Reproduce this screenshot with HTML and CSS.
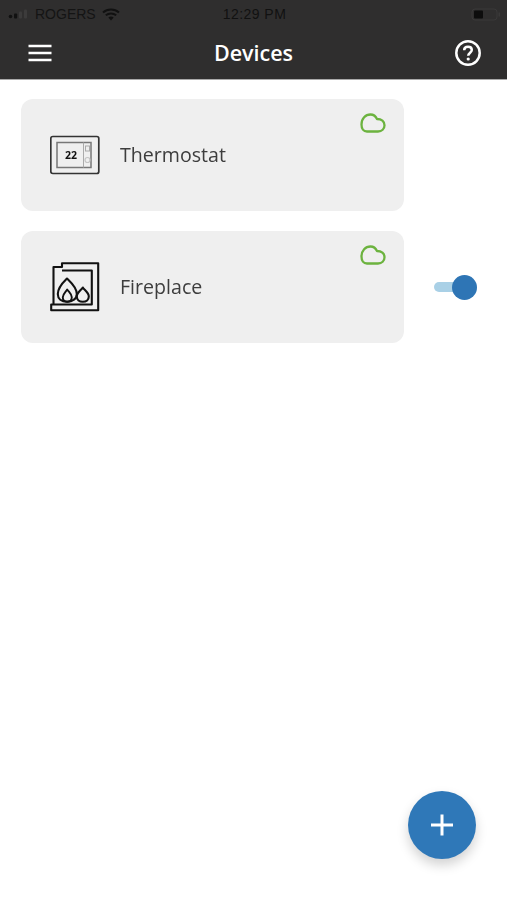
FILE: index.html
```html
<!DOCTYPE html>
<html lang="en">
<head>
<meta charset="utf-8">
<title>Devices</title>
<link rel="stylesheet" href="styles.css">
</head>
<body>
<div class="app">
  <header class="header">
    <div class="status">
      <div class="status-left">
        <svg class="signal" width="22" height="10" viewBox="0 0 22 10"><circle cx="2.500" cy="7.500" r="1.800" fill="#111"/><rect x="6" y="4.500" width="3.200" height="5" rx="1" fill="#111"/><rect x="11" y="2.500" width="3" height="7" rx="1" fill="#3c3b3b"/><rect x="16" y="0.500" width="3" height="9" rx="1" fill="#3c3b3b"/></svg>
        <span class="carrier">ROGERS</span>
        <svg class="wifi" width="18" height="13" viewBox="0 0 18 13"><path d="M1 4.500C5.500 .5 12.500 .5 17 4.500M3.800 7.300C6.800 4.800 11.200 4.800 14.200 7.300" fill="none" stroke="#111" stroke-width="2"/><path d="M6.300 9.400C8 8.200 10 8.200 11.700 9.400L9 12.500Z" fill="#111"/></svg>
      </div>
      <span class="clock">12:29 PM</span>
      <svg class="battery" width="30" height="13" viewBox="0 0 30 13"><rect x="1" y="1" width="25" height="11" rx="3" fill="none" stroke="#3a3939" stroke-width="1"/><rect x="3" y="2.500" width="9" height="8" rx="1" fill="#0d0d0d"/><rect x="27.500" y="4.500" width="1.500" height="4" fill="#3a3939"/></svg>
    </div>
    <nav class="nav">
      <svg class="nav-icon" width="26" height="20" viewBox="0 0 26 20"><path d="M1.500 3h23M1.500 10h23M1.500 17h23" stroke="#fff" stroke-width="2.600" fill="none"/></svg>
      <h1 class="title">Devices</h1>
      <svg class="nav-icon" width="28" height="28" viewBox="0 0 28 28"><circle cx="14" cy="14" r="11.700" fill="none" stroke="#fff" stroke-width="2.500"/><path d="M10.200 11.200C10.200 9 11.900 7.800 14 7.800C16.200 7.800 17.800 9.100 17.800 11C17.800 13.600 14.200 13.800 14.200 16.800" fill="none" stroke="#fff" stroke-width="2.500"/><circle cx="14.200" cy="20" r="1.600" fill="#fff"/></svg>
    </nav>
  </header>

  <main class="list">
    <div class="row">
      <div class="card">
        <svg class="device-icon" width="50" height="50" viewBox="0 0 50 50">
          <rect x="0.800" y="6.500" width="48" height="37" rx="2" fill="none" stroke="#333" stroke-width="1.700"/>
          <rect x="7" y="12.500" width="34" height="25" fill="none" stroke="#777" stroke-width="1.500"/>
          <path d="M33.500 12.500v25" stroke="#aaa" stroke-width="1"/>
          <rect x="35.500" y="16" width="4" height="5" fill="none" stroke="#aaa" stroke-width="1"/>
          <circle cx="37.500" cy="30" r="2.500" fill="none" stroke="#c4c4c4" stroke-width="1.200"/>
          <text class="temp" x="21" y="29" text-anchor="middle">22</text>
        </svg>
        <span class="name">Thermostat</span>
        <svg class="cloud" width="26" height="20" viewBox="0 0 26 20"><path d="M7 18.500C3.500 18.500 1.500 15.500 1.500 11.500C1.500 5.500 5.500 1.500 10.500 1.500C13.500 1.500 15.800 3.300 17 6C21.500 6 24.500 8.500 24.500 12.300C24.500 16 21.800 18.500 18 18.500Z" fill="none" stroke="#6cb33f" stroke-width="2.300" stroke-linejoin="round"/></svg>
      </div>
    </div>
    <div class="row">
      <div class="card">
        <svg class="device-icon" width="50" height="50" viewBox="0 0 50 50">
          <path d="M3.500 42.500V5H12V1.300H48.200V48.300H1.200V42.500H41.800V8.500H12" fill="none" stroke="#111" stroke-width="2.100" stroke-linejoin="round"/>
          <path d="M17 16.500C20 19.500 26.800 25 26.800 32C26.800 36.800 22.500 39.800 17 39.800C11.500 39.800 7.800 36.800 7.800 32C7.800 25 14 19.500 17 16.500Z" fill="none" stroke="#111" stroke-width="2.100" stroke-linejoin="round"/>
          <path d="M17.200 27.500C18.800 30 21.800 32 21.800 35.300C21.800 38 19.800 39.800 17.200 39.800C14.600 39.800 12.800 38 12.800 35.300C12.800 32 15.800 30 17.200 27.500Z" fill="none" stroke="#111" stroke-width="1.900" stroke-linejoin="round"/>
          <path d="M32.800 25.500C34.300 28 38.800 30.500 38.800 34.500C38.800 37.700 36.300 39.800 32.800 39.800C29.300 39.800 26.800 37.700 26.800 34.500C26.800 30.500 31.300 28 32.800 25.500Z" fill="none" stroke="#111" stroke-width="2.100" stroke-linejoin="round"/>
        </svg>
        <span class="name">Fireplace</span>
        <svg class="cloud" width="26" height="20" viewBox="0 0 26 20"><path d="M7 18.500C3.500 18.500 1.500 15.500 1.500 11.500C1.500 5.500 5.500 1.500 10.500 1.500C13.500 1.500 15.800 3.300 17 6C21.500 6 24.500 8.500 24.500 12.300C24.500 16 21.800 18.500 18 18.500Z" fill="none" stroke="#6cb33f" stroke-width="2.300" stroke-linejoin="round"/></svg>
      </div>
      <div class="toggle"><span class="track"></span><span class="knob"></span></div>
    </div>
  </main>

  <button class="fab" type="button" aria-label="Add device">
    <svg width="24" height="24" viewBox="0 0 24 24"><path d="M12 1.500v21M1 12h22" stroke="#fff" stroke-width="3" fill="none"/></svg>
  </button>
</div>
</body>
</html>
```

FILE: styles.css
```css
* { box-sizing: border-box; }
html, body { margin: 0; padding: 0; background: #fff; }
body { font-family: "Open Sans", "Noto Sans", sans-serif; }

.app {
  position: relative;
  width: 507px;
  height: 900px;
  overflow: hidden;
  filter: blur(0.6px);
}

.header {
  height: 80px;
  background: #2f2e2e;
  border-bottom: 1px solid #a9a9a9;
}

.status {
  height: 28px;
  display: grid;
  grid-template-columns: 1fr auto 1fr;
  align-items: center;
  padding: 0 6px 0 8px;
  color: #111;
  font-family: "Liberation Sans", Arial, sans-serif;
  font-size: 14px;
}
.status-left { display: flex; align-items: center; gap: 5px; }
.carrier { color: #141414; }
.wifi { margin-left: 1px; }
.clock { color: #111; letter-spacing: .45px; }
.battery { justify-self: end; }

.nav {
  height: 51px;
  display: flex;
  align-items: center;
  justify-content: space-between;
  padding: 0 25px 2px 27px;
}
.title {
  margin: 0;
  color: #fff;
  font-size: 21.500px;
  font-weight: 600;
  line-height: 28px;
}
.nav-icon { display: block; }

.list {
  display: flex;
  flex-direction: column;
  gap: 20px;
  padding: 19px 0 0 21px;
}
.row { display: flex; align-items: center; }

.card {
  position: relative;
  width: 383px;
  height: 112px;
  background: #efefef;
  border-radius: 12px;
  display: flex;
  align-items: center;
  gap: 20px;
  padding-left: 29px;
}
.device-icon { display: block; flex: none; }
.temp {
  font-family: "Open Sans", sans-serif;
  font-size: 10.500px;
  font-weight: 700;
  fill: #111;
}
.name {
  color: #3d3d3d;
  font-size: 19.600px;
  line-height: 28px;
}
.cloud { position: absolute; top: 14px; right: 18px; }

.toggle {
  position: relative;
  width: 43px;
  height: 25px;
  margin-left: 30px;
  display: flex;
  align-items: center;
}
.track {
  width: 30px;
  height: 10.500px;
  border-radius: 6px;
  background: #a9d0e6;
}
.knob {
  position: absolute;
  right: 0;
  top: 0;
  width: 25px;
  height: 25px;
  border-radius: 50%;
  background: #2e75b5;
}

.fab {
  position: absolute;
  left: 408px;
  top: 791px;
  width: 68px;
  height: 68px;
  padding: 0;
  border: 0;
  border-radius: 50%;
  background: #2f78b8;
  box-shadow: 0 6px 12px rgba(0, 0, 0, .18);
  display: flex;
  align-items: center;
  justify-content: center;
}
.fab svg { display: block; }
```
